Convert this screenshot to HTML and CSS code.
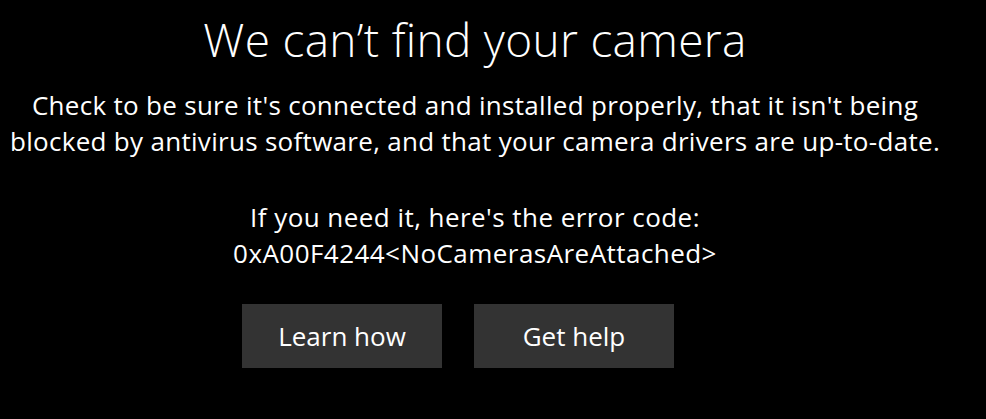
FILE: index.html
```html
<!DOCTYPE html>
<html lang="en">
<head>
<meta charset="utf-8">
<title>Camera</title>
<link rel="stylesheet" href="styles.css">
</head>
<body>
<main class="panel">
  <h1 class="title">We can’t find your camera</h1>
  <p class="message">Check to be sure it's connected and installed properly, that it isn't being<br>blocked by antivirus software, and that your camera drivers are up-to-date.</p>
  <p class="message code">If you need it, here's the error code:<br>0xA00F4244&lt;NoCamerasAreAttached&gt;</p>
  <div class="actions">
    <button class="btn">Learn how</button>
    <button class="btn">Get help</button>
  </div>
</main>
</body>
</html>
```
FILE: styles.css
```css
html, body {
  margin: 0;
  padding: 0;
  background: #000;
}
body {
  width: 986px;
  height: 419px;
  overflow: hidden;
  font-family: "Open Sans", "Noto Sans", sans-serif;
  color: #fff;
}
.panel {
  width: 950px;
  padding-top: 11px;
  text-align: center;
}
.title {
  margin: 0;
  font-size: 46px;
  font-weight: 300;
  line-height: 56px;
  letter-spacing: 0.3px;
}
.message {
  margin: 20px 0 0;
  font-size: 26px;
  line-height: 36px;
  letter-spacing: 0.3px;
}
.code {
  margin-top: 40px;
  letter-spacing: 0.45px;
}
.actions {
  display: flex;
  justify-content: center;
  gap: 32px;
  margin-top: 33px;
  padding-right: 34px;
}
.btn {
  width: 200px;
  height: 64px;
  border: none;
  background: #333;
  color: #fff;
  font-family: inherit;
  font-size: 26px;
  padding: 0;
}
```
